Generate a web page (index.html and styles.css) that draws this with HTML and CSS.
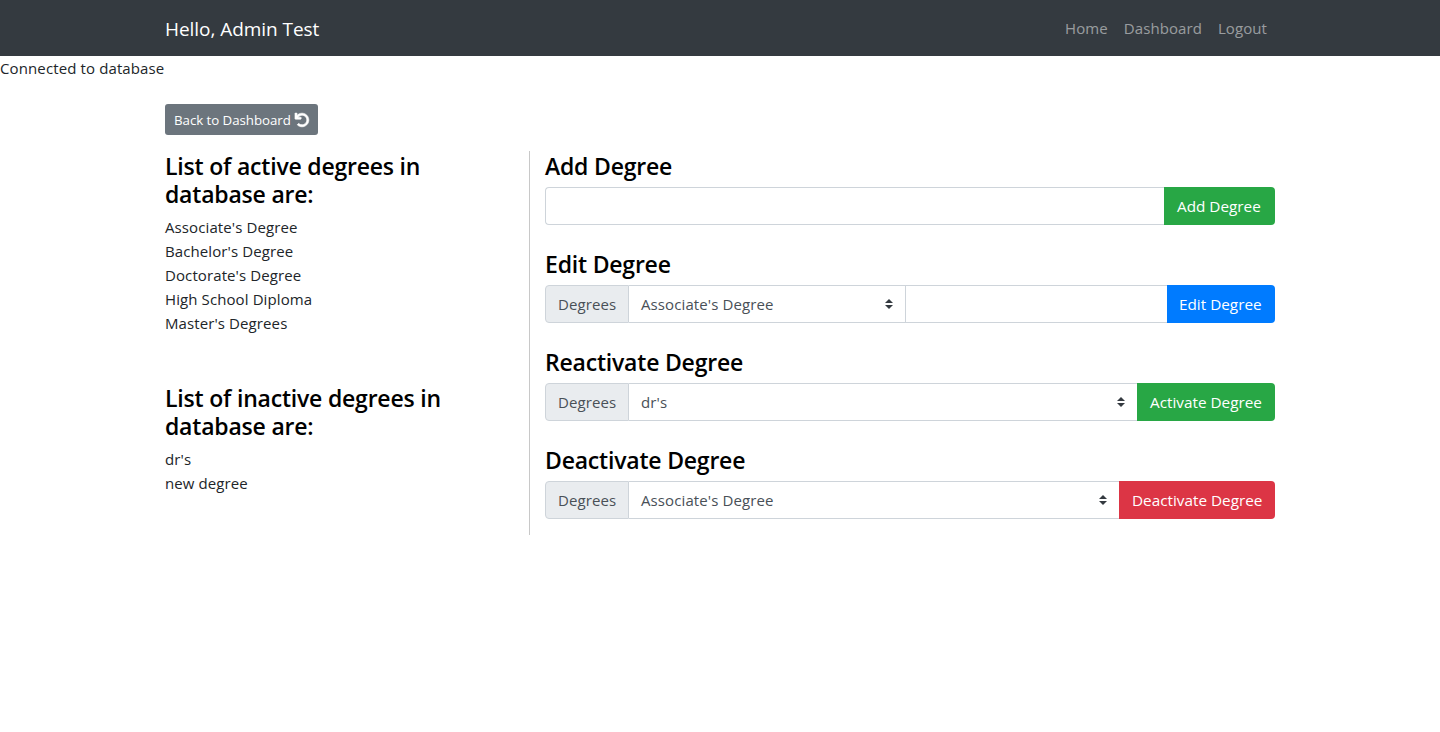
FILE: index.html
```html
<!DOCTYPE html>
<html lang="en">
<head>
<meta charset="utf-8">
<title>Degrees</title>
<link rel="stylesheet" href="styles.css">
</head>
<body>
<nav class="navbar">
  <div class="container navbar-inner">
    <a class="brand">Hello, Admin Test</a>
    <div class="nav-links"><a class="nav-link">Home</a><a class="nav-link">Dashboard</a><a class="nav-link">Logout</a></div>
  </div>
</nav>
<div class="status">Connected to database</div>
<main class="container">
  <a class="btn-back"><span>Back to Dashboard</span>
    <svg class="undo" viewBox="0 0 512 512"><path fill="currentColor" stroke="currentColor" stroke-width="24" d="M212.333 224.333H12c-6.627 0-12-5.373-12-12V12C0 5.373 5.373 0 12 0h48c6.627 0 12 5.373 12 12v78.112C117.773 39.279 184.260 7.470 258.175 8.007c136.906.994 246.448 111.623 246.157 248.532C504.041 393.258 393.120 504 256.333 504c-64.089 0-122.496-24.313-166.510-64.215-5.099-4.622-5.334-12.554-.467-17.420l33.967-33.967c4.474-4.474 11.662-4.717 16.401-.525C170.760 415.336 211.580 432 256.333 432c97.268 0 176-78.716 176-176 0-97.267-78.716-176-176-176-58.496 0-110.280 28.476-142.274 72.333h98.274c6.627 0 12 5.373 12 12v48c0 6.627-5.373 12-12 12z"/></svg>
  </a>
  <div class="row">
    <section class="lists">
      <h4>List of active degrees in<br>database are:</h4>
      <ul><li>Associate's Degree</li><li>Bachelor's Degree</li><li>Doctorate's Degree</li><li>High School Diploma</li><li>Master's Degrees</li></ul>
      <h4>List of inactive degrees in<br>database are:</h4>
      <ul><li>dr's</li><li>new degree</li></ul>
    </section>
    <section class="forms">
      <h4>Add Degree</h4>
      <div class="group"><div class="input first"></div><button class="btn green add">Add Degree</button></div>
      <h4>Edit Degree</h4>
      <div class="group"><div class="prepend">Degrees</div><div class="select half"><span>Associate's Degree</span><svg class="caret" viewBox="0 0 4 5"><path fill="#343a40" d="M2 0L0 2h4zm0 5L0 3h4z"/></svg></div><div class="input"></div><button class="btn blue edit">Edit Degree</button></div>
      <h4>Reactivate Degree</h4>
      <div class="group"><div class="prepend">Degrees</div><div class="select"><span>dr's</span><svg class="caret" viewBox="0 0 4 5"><path fill="#343a40" d="M2 0L0 2h4zm0 5L0 3h4z"/></svg></div><button class="btn green activate">Activate Degree</button></div>
      <h4>Deactivate Degree</h4>
      <div class="group"><div class="prepend">Degrees</div><div class="select"><span>Associate's Degree</span><svg class="caret" viewBox="0 0 4 5"><path fill="#343a40" d="M2 0L0 2h4zm0 5L0 3h4z"/></svg></div><button class="btn red deactivate">Deactivate Degree</button></div>
    </section>
  </div>
</main>
</body>
</html>
```
FILE: styles.css
```css
* { box-sizing: border-box; }
body { margin: 0; background: #fff; color: #212529; font: 400 15px/24px "Open Sans", "Noto Sans", sans-serif; letter-spacing: 0.1px; }
.container { width: 1140px; margin: 0 auto; padding: 0 15px; }
.navbar { height: 56px; background: #343a40; }
.navbar-inner { height: 56px; display: flex; align-items: center; justify-content: space-between; }
.brand { padding-top: 1px; color: #fff; font-size: 19px; line-height: 30px; letter-spacing: -0.05px; }
.nav-links { display: flex; }
.nav-link { padding: 8px; color: rgba(255,255,255,.5); letter-spacing: 0.08px; }
.status { height: 24px; letter-spacing: 0.12px; }
.btn-back { display: flex; width: 153px; height: 31px; margin: 24px 0 16px; padding: 0 9px; align-items: center; gap: 4px; border-radius: 3px; background: #6c757d; color: #fff; font-size: 13.3px; letter-spacing: -0.05px; white-space: nowrap; }
.undo { width: 14px; height: 14px; flex: none; overflow: visible; }
.row { display: flex; margin: 0 -15px; }
.lists { width: 380px; height: 384px; padding: 0 15px; border-right: 1px solid #c8c8c8; }
h4 { margin: 0 0 7px; padding-top: 1px; color: #000; font-size: 23px; font-weight: 600; line-height: 28px; letter-spacing: -0.2px; white-space: nowrap; }
.lists ul { margin: 0 0 48px; padding: 0; list-style: none; }
.forms { width: 760px; padding: 0 15px; }
.group { display: flex; height: 38px; margin-bottom: 24px; }
.input { flex: 1; border: 1px solid #ced4da; border-right: 0; border-left: 0; }
.input.first { border-left: 1px solid #ced4da; border-radius: 4px 0 0 4px; }
.prepend { width: 84px; padding: 6px 12px; border: 1px solid #ced4da; border-radius: 4px 0 0 4px; background: #e9ecef; color: #495057; }
.select { display: flex; flex: 1; padding: 0 12px; align-items: center; justify-content: space-between; border: 1px solid #ced4da; border-width: 1px 0; color: #495057; }
.select.half { flex: none; width: 277px; border-right-width: 1px; }
.caret { width: 8px; height: 10px; }
.btn { padding: 0 0 0 13px; border: 0; border-radius: 0 4px 4px 0; color: #fff; font: 400 15.3px/24px "Open Sans", "Noto Sans", sans-serif; text-align: left; white-space: nowrap; }
.green { background: #28a745; }
.blue { background: #007bff; }
.red { background: #dc3545; }
.add { width: 111px; }
.edit { width: 108px; padding-left: 12px; }
.activate { width: 138px; }
.deactivate { width: 156px; }
```
